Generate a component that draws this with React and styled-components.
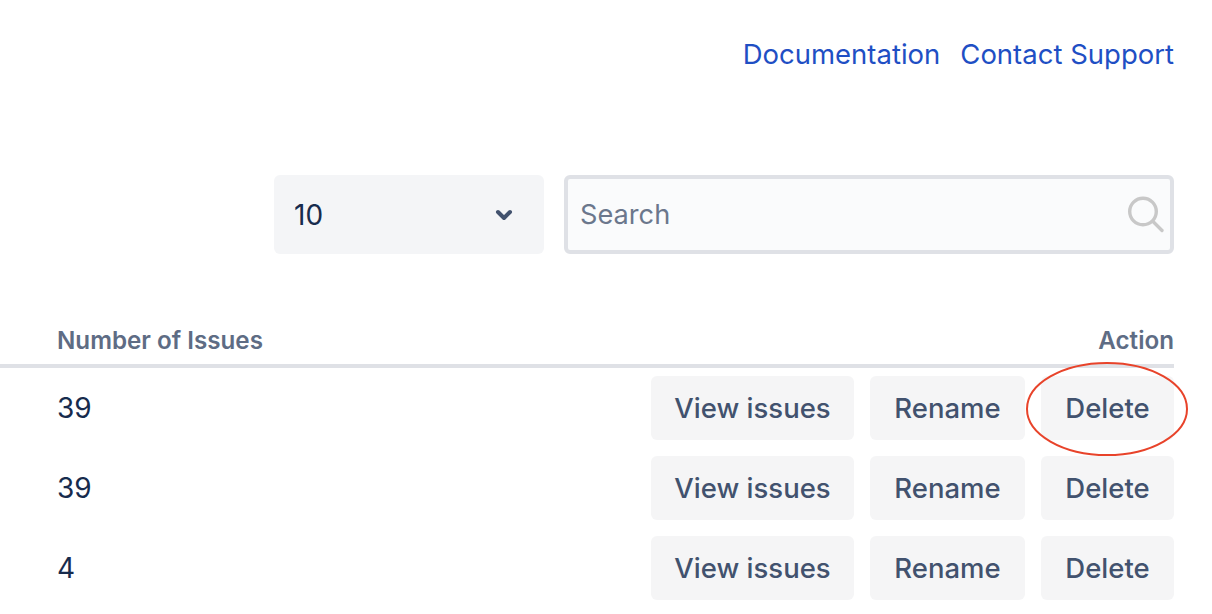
import React from 'react';
import styled, { createGlobalStyle } from 'styled-components';

const rows = [39, 39, 4];

const GlobalStyle = createGlobalStyle`
  html, body {
    margin: 0;
    background: #fff;
    overflow: hidden;
  }
  body {
    font-family: Inter, "Liberation Sans", sans-serif;
    -webkit-font-smoothing: antialiased;
  }
`;

const Page = styled.div`
  width: 1212px;
  height: 614px;
  padding-right: 38px;
  box-sizing: border-box;
  overflow: hidden;
`;

const TopLinks = styled.nav`
  display: flex;
  justify-content: flex-end;
  gap: 20px;
  padding-top: 37px;
  height: 175px;
  box-sizing: border-box;
`;

const TopLink = styled.a`
  color: #1f4fc4;
  font-size: 27.5px;
  line-height: 34px;
  text-decoration: none;
`;

const Filters = styled.div`
  display: flex;
  justify-content: flex-end;
  gap: 20px;
  height: 79px;
`;

const PageSize = styled.div`
  width: 270px;
  display: flex;
  align-items: center;
  justify-content: space-between;
  padding: 0 31px 0 20px;
  box-sizing: border-box;
  background: #f4f5f7;
  border-radius: 6px;
  color: #172b4d;
  font-size: 28px;
`;

const SearchBox = styled.div`
  width: 610px;
  display: flex;
  align-items: center;
  justify-content: space-between;
  padding: 0 5px 0 12px;
  box-sizing: border-box;
  background: #fafbfc;
  border: 4px solid #dfe1e6;
  border-radius: 6px;
  color: #6b778c;
  font-size: 27.2px;
`;

const HeaderRow = styled.div`
  display: flex;
  justify-content: space-between;
  align-items: flex-end;
  height: 114px;
  padding: 0 0 8px 57px;
  box-sizing: border-box;
  border-bottom: 4px solid #dfe1e6;
  color: #5e6c84;
  font-size: 24.2px;
  font-weight: 600;
  line-height: 30px;
`;

const Row = styled.div`
  display: flex;
  align-items: center;
  justify-content: space-between;
  height: 64px;
  margin-top: 16px;
  padding-left: 57px;
  &:first-of-type {
    margin-top: 8px;
  }
`;

const Count = styled.span`
  color: #172b4d;
  font-size: 28px;
`;

const Actions = styled.div`
  display: flex;
  gap: 16px;
`;

const ActionButton = styled.button`
  position: relative;
  height: 64px;
  width: ${(p) => p.$width}px;
  padding: 0;
  border: none;
  border-radius: 6px;
  background: #f5f5f6;
  color: #42526e;
  font-family: inherit;
  font-size: 27.5px;
  font-weight: 500;
`;

const Circle = styled.svg`
  position: absolute;
  left: -15px;
  top: -14px;
  overflow: visible;
  pointer-events: none;
`;

const App = () => (
  <Page>
    <GlobalStyle />
    <TopLinks>
      <TopLink href="#">Documentation</TopLink>
      <TopLink href="#">Contact Support</TopLink>
    </TopLinks>
    <Filters>
      <PageSize>
        10
        <svg width="18" height="12" viewBox="0 0 18 12">
          <path d="M3 3l6 6 6-6" fill="none" stroke="#42526e" strokeWidth="4" strokeLinejoin="round" strokeLinecap="round" />
        </svg>
      </PageSize>
      <SearchBox>
        Search
        <svg width="40" height="40" viewBox="0 0 40 40">
          <circle cx="18" cy="16.5" r="13.3" fill="none" stroke="#c8c8c8" strokeWidth="3.4" />
          <path d="M28 26.5l9 9" stroke="#c8c8c8" strokeWidth="3.4" strokeLinecap="round" />
        </svg>
      </SearchBox>
    </Filters>
    <HeaderRow>
      <span>Number of Issues</span>
      <span>Action</span>
    </HeaderRow>
    <div>
      {rows.map((count, i) => (
        <Row key={i}>
          <Count>{count}</Count>
          <Actions>
            <ActionButton $width={203}>View issues</ActionButton>
            <ActionButton $width={155}>Rename</ActionButton>
            <ActionButton $width={133}>
              Delete
              {i === 0 && (
                <Circle width="162" height="94" viewBox="0 0 162 94">
                  <ellipse cx="81" cy="47" rx="80" ry="46" fill="none" stroke="#e8432a" strokeWidth="2" />
                </Circle>
              )}
            </ActionButton>
          </Actions>
        </Row>
      ))}
    </div>
  </Page>
);

export default App;
